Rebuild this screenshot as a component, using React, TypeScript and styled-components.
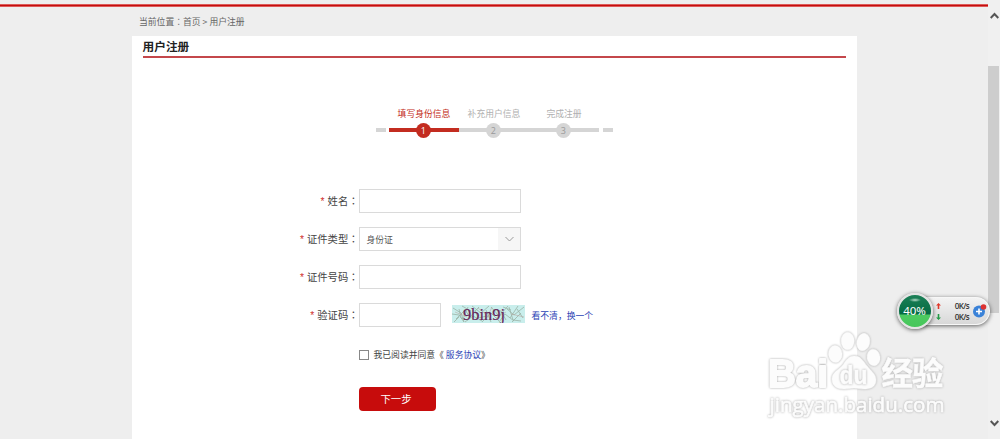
import React from 'react';
import styled, { createGlobalStyle } from 'styled-components';

const FONT_FAMILY = '"Noto Sans CJK SC", "Noto Sans", sans-serif';

const steps = [
  { no: 1, title: '填写身份信息', active: true },
  { no: 2, title: '补充用户信息', active: false },
  { no: 3, title: '完成注册', active: false },
];

const GlobalStyle = createGlobalStyle`
  * { box-sizing: border-box; }
  body {
    margin: 0;
    overflow: hidden;
    background: #eee;
    font-family: ${FONT_FAMILY};
  }
`;

const Window = styled.div`
  position: relative;
  display: flex;
  height: 439px;
  overflow: hidden;
  background: #eee;
`;

const Page = styled.main`
  flex: 1;
  display: flex;
  flex-direction: column;
`;

const TopLine = styled.div`
  height: 3px;
  margin-top: 4px;
  background: #c40d0d;
  border-top: 1px solid #dd5a58;
  border-bottom: 1px solid #dd5a58;
`;

const Breadcrumb = styled.nav`
  height: 29px;
  padding-left: 139px;
  font-size: 8.8px;
  line-height: 29px;
  color: #666;
  white-space: pre;
`;

const Colon = styled.span`
  font-family: 'Noto Sans CJK TC', sans-serif;
`;

const Panel = styled.section`
  flex: 1;
  width: 725px;
  margin-left: 132px;
  padding: 0 11px 0 10.5px;
  background: #fff;
`;

const Title = styled.h1`
  height: 22px;
  margin: 0;
  font-size: 11.7px;
  line-height: 20px;
  color: #222;
  border-bottom: 2px solid #c4474b;
`;

const Steps = styled.div`
  display: flex;
  align-items: flex-end;
  width: 238px;
  margin: 49px 0 0 233.5px;
`;

const Dash = styled.span`
  width: 10px;
  height: 4px;
  margin-bottom: 6px;
  background: #d5d5d5;
`;

const StepList = styled.div`
  display: flex;
  margin: 0 4px 0 3px;
`;

const Step = styled.div<{ $active: boolean }>`
  display: flex;
  flex-direction: column;
  align-items: center;
  width: 70px;
  font-size: 8.8px;
  line-height: 14px;
  white-space: nowrap;
  color: ${({ $active }) => ($active ? '#c32c20' : '#b0b0b0')};
`;

const StepTrack = styled.div<{ $active: boolean }>`
  display: flex;
  justify-content: center;
  align-items: center;
  width: 100%;
  height: 15px;
  margin-top: 2px;
  padding-right: 1.5px;
  background: linear-gradient(${({ $active }) => ($active ? '#c32c20, #c32c20' : '#d5d5d5, #d5d5d5')})
    0 5px / 100% 4px no-repeat;
`;

const StepNo = styled.span<{ $active: boolean }>`
  width: 15px;
  height: 15px;
  border-radius: 50%;
  font-family: 'Open Sans', sans-serif;
  font-size: 9px;
  line-height: 15px;
  text-align: center;
  color: ${({ $active }) => ($active ? '#fff' : '#999')};
  background: ${({ $active }) => ($active ? '#c32c20' : '#d5d5d5')};
`;

const Form = styled.form`
  display: flex;
  flex-direction: column;
  gap: 14px;
  margin-top: 51px;
`;

const Row = styled.div`
  display: flex;
  align-items: center;
  height: 24px;
`;

const Label = styled.label`
  width: 216px;
  font-size: 10.3px;
  line-height: 24px;
  text-align: right;
  color: #444;
`;

const Required = styled.span`
  margin-right: 3px;
  font-family: 'Liberation Sans', sans-serif;
  color: #d0302c;
`;

const Input = styled.input<{ $width?: number }>`
  width: ${({ $width }) => $width ?? 162}px;
  height: 24px;
  padding: 0 7px;
  border: 1px solid #dadada;
  background: #fff;
  outline: none;
`;

const Select = styled.div`
  display: flex;
  width: 162px;
  height: 24px;
  padding-left: 7px;
  border: 1px solid #dadada;
  font-size: 8.8px;
  line-height: 23px;
  color: #555;
`;

const SelectArrow = styled.span`
  display: flex;
  align-items: center;
  justify-content: center;
  width: 22px;
  margin-left: auto;
  padding-left: 1px;
  background: #f6f6f6;
`;

const Captcha = styled.svg`
  width: 73px;
  height: 18px;
  margin: 0 7px 2px 11px;
`;

const Link = styled.a`
  font-size: 8.8px;
  color: #2c43b5;
  text-decoration: none;
`;

const Agreement = styled.label`
  display: flex;
  align-items: center;
  height: 16px;
  margin: 5px 0 0 216px;
  font-size: 8.8px;
  color: #444;
  white-space: pre;
`;

const Checkbox = styled.input`
  appearance: none;
  width: 10px;
  height: 10px;
  margin: 1px 5px 0 0;
  border: 1px solid #888;
  background: #fff;
`;

const Submit = styled.button`
  width: 77px;
  height: 24px;
  margin: 11px 0 0 216px;
  padding: 0 2px 1px 0;
  border: 0;
  border-radius: 4px;
  font-family: inherit;
  font-size: 10.4px;
  color: #fff;
  background: #c70c0c;
`;

const Scrollbar = styled.aside`
  display: flex;
  flex-direction: column;
  align-items: center;
  width: 12px;
  padding: 12px 0 12px;
  background: #f0f0f0;
`;

const Thumb = styled.div`
  align-self: flex-start;
  width: 11px;
  height: 247px;
  margin: 46px 0 auto;
  background: #cdcdcd;
`;

const SpeedWidget = styled.div`
  position: absolute;
  left: 897px;
  top: 293px;
  display: flex;
  align-items: center;
  height: 36px;
`;

const Ball = styled.div`
  z-index: 1;
  width: 36px;
  height: 36px;
  padding-right: 1px;
  border: 2px solid #e4e4e4;
  border-radius: 50%;
  font: 11.5px/31px 'Noto Sans', sans-serif;
  text-align: center;
  color: #fff;
  background:
    radial-gradient(ellipse 6px 2px at 50% 5px, #b9dccb 0%, transparent 100%),
    linear-gradient(#1c8057 0, #056b43 19px, #4dcb61 20px, #46c65a 100%);
  box-shadow: 0 1px 4px rgba(0, 0, 0, 0.6);
`;

const Pill = styled.div`
  display: flex;
  align-items: center;
  width: 73px;
  height: 28px;
  margin-left: -16px;
  padding-left: 18px;
  border: 1px solid #f7f7f7;
  border-radius: 0 14px 14px 0;
  background: linear-gradient(#f3f3f3, #d8d8d8);
  box-shadow: 0 1px 4px rgba(0, 0, 0, 0.6);
`;

const Speeds = styled.div`
  width: 34px;
`;

const Speed = styled.div`
  display: flex;
  justify-content: space-between;
  align-items: center;
  height: 11px;
  padding-right: 1px;
  font: 600 8px/11px 'Open Sans', sans-serif;
  letter-spacing: -0.6px;
  color: #333;
`;

const PlusIcon = styled.svg`
  flex: none;
  margin: 0 0 2px 2px;
`;

const Watermark = styled.svg`
  position: absolute;
  left: 760px;
  top: 325px;
`;

const WatermarkShape = styled.g`
  fill: #fcfcfc;
  stroke: #fcfcfc;
  stroke-linejoin: round;
  filter: drop-shadow(0 0 0.9px #a8a8a8);
`;

const ArrowIcon = ({ up }: { up?: boolean }) => (
  <svg width='5' height='6' viewBox='0 0 5 6'>
    <path
      d={up ? 'M2.5 0 5 2.6H3.3V6H1.7V2.6H0z' : 'M2.5 6 5 3.4H3.3V0H1.7V3.4H0z'}
      fill={up ? '#e0392b' : '#259b48'}
    />
  </svg>
);

const FieldLabel = ({ children }: { children: React.ReactNode }) => (
  <Label>
    <Required>*</Required>
    {children}
    <Colon>：</Colon>
  </Label>
);

const App = () => {
  return (
    <Window>
      <GlobalStyle />
      <Page>
        <TopLine />
        <Breadcrumb>
          当前位置<Colon>：</Colon>首页 &gt; 用户注册
        </Breadcrumb>
        <Panel>
          <Title>用户注册</Title>

          <Steps>
            <Dash />
            <StepList>
              {steps.map(({ no, title, active }) => (
                <Step key={no} $active={active}>
                  {title}
                  <StepTrack $active={active}>
                    <StepNo $active={active}>{no}</StepNo>
                  </StepTrack>
                </Step>
              ))}
            </StepList>
            <Dash />
          </Steps>

          <Form>
            <Row>
              <FieldLabel>姓名</FieldLabel>
              <Input />
            </Row>
            <Row>
              <FieldLabel>证件类型</FieldLabel>
              <Select>
                身份证
                <SelectArrow>
                  <svg width='9' height='6' viewBox='0 0 9 6' fill='none' stroke='#999'>
                    <path d='M.5 1 4.5 5l4-4' />
                  </svg>
                </SelectArrow>
              </Select>
            </Row>
            <Row>
              <FieldLabel>证件号码</FieldLabel>
              <Input />
            </Row>
            <Row>
              <FieldLabel>验证码</FieldLabel>
              <Input $width={82} />
              <Captcha viewBox='0 0 73 18'>
                <rect width='73' height='18' fill='#c9eeec' />
                <g fill='none' stroke='#9ab3a6' strokeWidth='0.8'>
                  <path d='M1 3l8 5 3 9M4 14l9-9 5 7 9-10M13 17l8-6 9 5M0 9l7 1 5 7M20 1l9 7 8-7M30 17l9-9 8 8M39 2l8 9 9-10M47 17l6-8 9 7M55 4l7 6 10-8M60 17l9-9M65 4l6 9M10 1l9 5M34 5l5 12M51 2l8 3M2 17l5-5' />
                  <path d='M7 4l2 9 7 2M23 5l3 8 9-2M42 5l7 1 5 9M57 2l4 13 8 1M66 1l-8 12M16 2l-5 12' />
                </g>
                <g fill='none' stroke='#b9a9a4' strokeWidth='0.6'>
                  <path d='M3 7l12 5M26 3l11 9M44 13l10-6M59 9l13 3M34 15l6-13' />
                </g>
                <text
                  x='11'
                  y='14.5'
                  fontFamily='Liberation Serif, serif'
                  fontSize='17'
                  fill='#652458'
                  stroke='#652458'
                  strokeWidth='0.2'
                  textLength='42'
                  lengthAdjust='spacingAndGlyphs'
                >
                  9bin9j
                </text>
              </Captcha>
              <Link>看不清，换一个</Link>
            </Row>
            <Agreement>
              <Checkbox type='checkbox' />
              我已阅读并同意《 <Link>服务协议</Link>》
            </Agreement>
            <Submit type='button'>下一步</Submit>
          </Form>
        </Panel>
      </Page>

      <Scrollbar>
        <svg width='9' height='8' viewBox='0 0 9 8' fill='none' stroke='#555' strokeWidth='2'>
          <path d='M.7 6 4.5 2l3.8 4' />
        </svg>
        <Thumb />
        <svg width='9' height='8' viewBox='0 0 9 8' fill='none' stroke='#555' strokeWidth='2'>
          <path d='M.7 2 4.5 6l3.8-4' />
        </svg>
      </Scrollbar>

      <Watermark width='195' height='100' viewBox='0 0 195 100'>
        <WatermarkShape strokeWidth='1.8'>
          <text
            x='8'
            y='61.5'
            fontFamily='Liberation Sans, sans-serif'
            fontSize='39'
            fontWeight='bold'
            textLength='60'
            lengthAdjust='spacingAndGlyphs'
          >
            Bai
          </text>
        </WatermarkShape>
        <WatermarkShape strokeWidth='0.5'>
          <ellipse cx='75.3' cy='29' rx='6.8' ry='8.5' transform='rotate(-5 75 29)' />
          <ellipse cx='87.7' cy='16' rx='6.5' ry='8.8' />
          <ellipse cx='103.3' cy='17' rx='6.5' ry='8.8' transform='rotate(12 103 17)' />
          <ellipse cx='113.5' cy='32.5' rx='6.5' ry='8.3' transform='rotate(-8 113 32)' />
          <path d='M94 31C101 31 103 36 107 41C111 46 116 49 116 55C116 62 110 64 104 64C100 64 98 63 94 63C90 63 88 64 84 64C77 64 72 61 72 54C72 47 79 45 83 40C86 35 89 31 94 31z' />
        </WatermarkShape>
        <WatermarkShape strokeWidth='0.5'>
          <text
            x='79.5'
            y='59'
            fontFamily='Liberation Sans, sans-serif'
            fontSize='25'
            fontWeight='bold'
            textLength='28'
            lengthAdjust='spacingAndGlyphs'
          >
            du
          </text>
        </WatermarkShape>
        <WatermarkShape strokeWidth='0.5'>
          <text
            x='121.5'
            y='60'
            fontFamily='Noto Sans CJK SC, sans-serif'
            fontSize='31.5'
            fontWeight='bold'
            textLength='62'
          >
            经验
          </text>
        </WatermarkShape>
        <WatermarkShape strokeWidth='0.7'>
          <text
            x='9.5'
            y='86.5'
            fontFamily='Open Sans, sans-serif'
            fontSize='20.5'
            textLength='175'
            lengthAdjust='spacingAndGlyphs'
          >
            jingyan.baidu.com
          </text>
        </WatermarkShape>
      </Watermark>

      <SpeedWidget>
        <Ball>40%</Ball>
        <Pill>
          <Speeds>
            <Speed>
              <ArrowIcon up />
              0K/s
            </Speed>
            <Speed>
              <ArrowIcon />
              0K/s
            </Speed>
          </Speeds>
          <PlusIcon width='15' height='15' viewBox='0 0 15 15'>
            <circle cx='7' cy='8.5' r='6' fill='#3a82d8' />
            <path d='M7 5.5v6M4 8.5h6' stroke='#fff' strokeWidth='1.6' />
            <circle cx='11.5' cy='4' r='2.8' fill='#dc3230' />
          </PlusIcon>
        </Pill>
      </SpeedWidget>
    </Window>
  );
};

export default App;
